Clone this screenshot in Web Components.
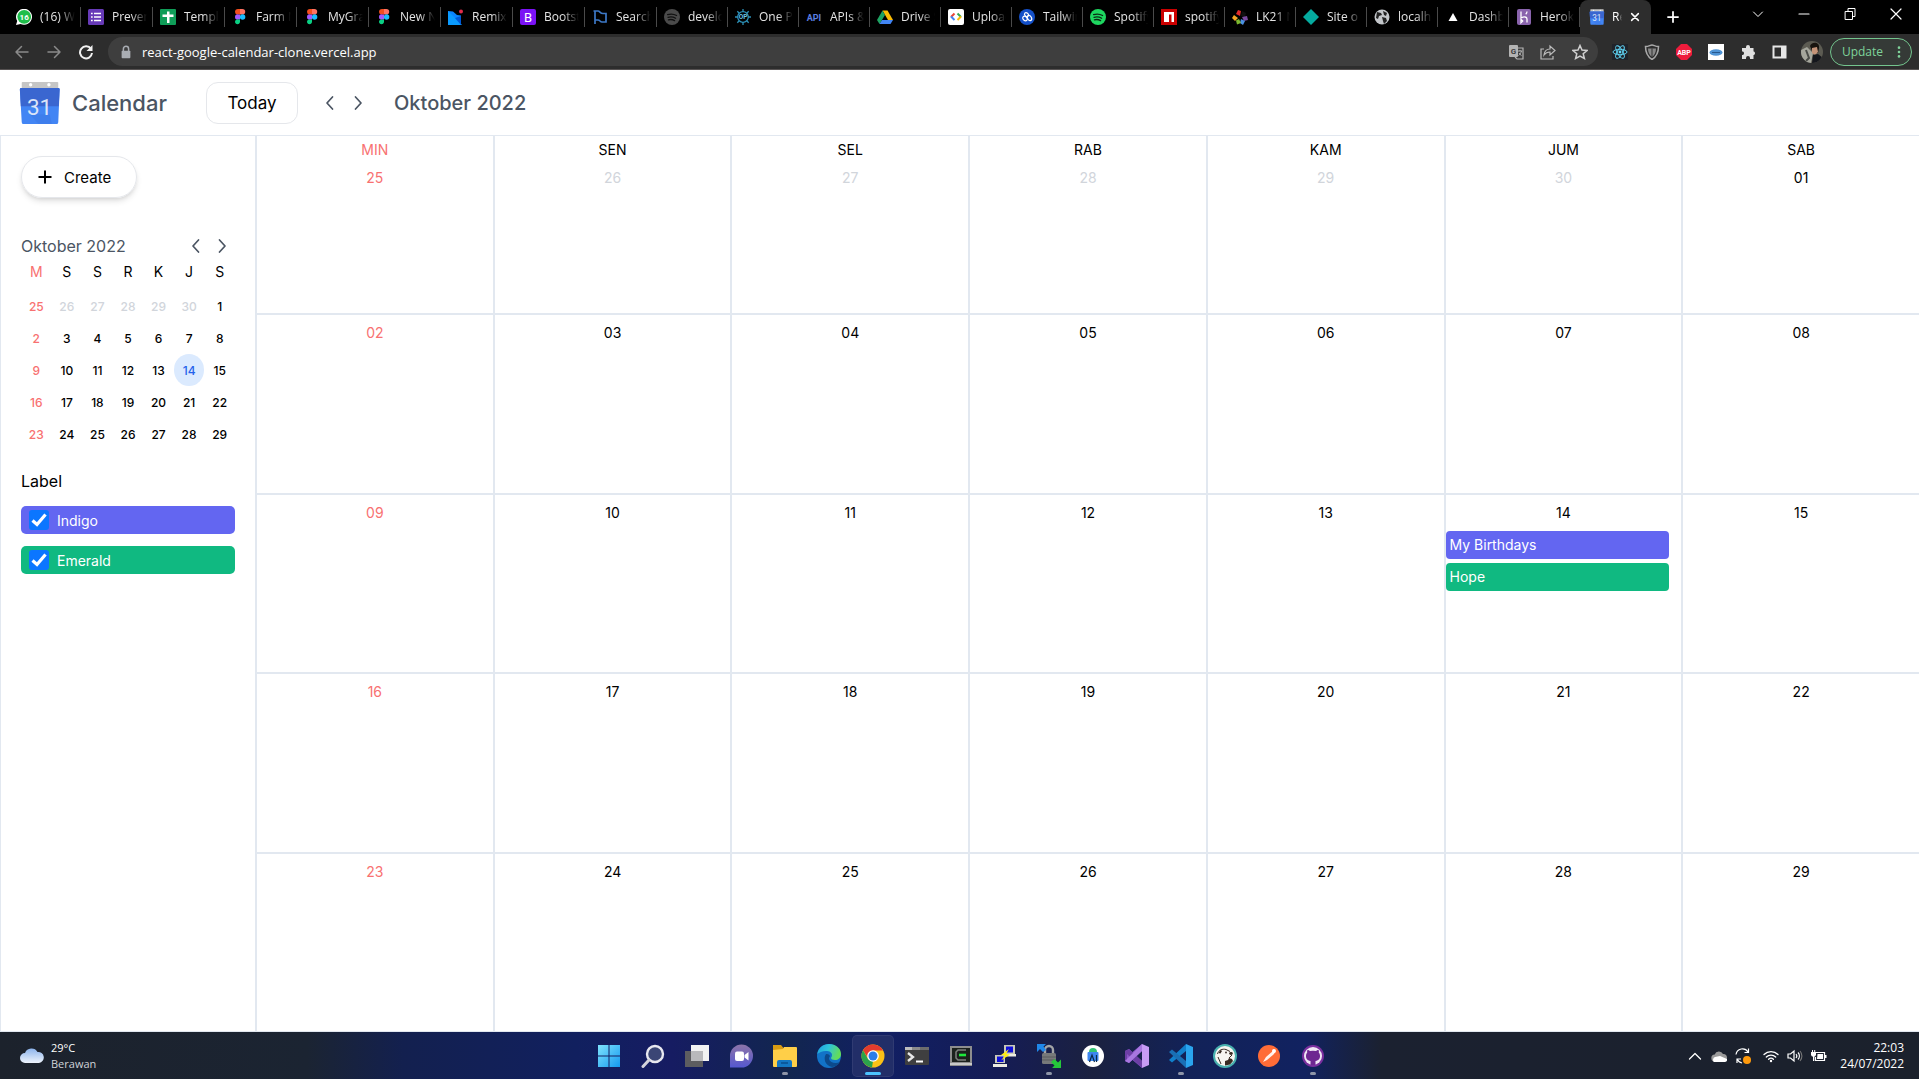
<!DOCTYPE html>
<html lang="id">
<head>
<meta charset="utf-8">
<title>Calendar</title>
<style>
  html, body { margin: 0; height: 100%; }
  body { font-family: Inter, "Open Sans", sans-serif; background: #fff; color: #000; }
</style>
</head>
<body>
<desktop-screen></desktop-screen>

<script>
const svg = (body, box = '0 0 16 16') => `<svg viewBox="${box}" xmlns="http://www.w3.org/2000/svg">${body}</svg>`;
const line = (d, w = 1.5, box) => svg(`<path d="${d}" fill="none" stroke="currentColor" stroke-width="${w}" stroke-linecap="round" stroke-linejoin="round"/>`, box);
const figma = svg('<path d="M3 3a3 3 0 0 1 3-3h2v5.6H6A2.8 2.8 0 0 1 3 3z" fill="#f24e1e"/><path d="M8 0h2.4a2.8 2.8 0 0 1 0 5.6H8z" fill="#ff7262"/><path d="M3 8a2.7 2.7 0 0 1 3-2.6h2v5.2H6A2.7 2.7 0 0 1 3 8z" fill="#a259ff"/><circle cx="10.6" cy="8" r="2.7" fill="#1abcfe"/><path d="M3 13.3a2.7 2.7 0 0 1 3-2.7h2v2.7a2.6 2.6 0 0 1-5 0z" fill="#0acf83"/>');
const spotify = (bg, fg) => svg(`<circle cx="8" cy="8" r="8" fill="${bg}"/><path d="M3.6 5.6c3-.9 6.400-.6 9 .9M4 8.300c2.600-.8 5.400-.4 7.600.9M4.400 10.800c2.200-.6 4.300-.3 6.200.8" fill="none" stroke="${fg}" stroke-width="1.300" stroke-linecap="round"/>`);
const label = (x, y, size, fill, text, extra = '') => `<text x="${x}" y="${y}" font-family="Roboto, sans-serif" font-size="${size}" fill="${fill}" text-anchor="middle" ${extra}>${text}</text>`;

const ICONS = {
  whatsapp: svg('<path d="M0 16l1.200-4A8 8 0 1 1 4.500 15z" fill="#fff"/><circle cx="8.200" cy="7.800" r="6.900" fill="#1fbe4b"/>' + label(8.2, 11, 8, '#fff', '16', 'font-weight="700"')),
  forms: svg('<rect width="16" height="16" rx="1.500" fill="#673ab7"/><path d="M6 4.500h7M6 8h7M6 11.500h7" stroke="#fff" stroke-width="1.700"/><path d="M3 4.500h1.700M3 8h1.700M3 11.500h1.700" stroke="#fff" stroke-width="1.700"/>'),
  sheets: svg('<rect width="16" height="16" rx="1" fill="#0f9d58"/><path d="M7 2.500h2.500V14H7zM2.500 5.500h11V8h-11z" fill="#fff"/>'),
  figma,
  remix: svg('<path d="M0 2l5 .5 4 3.500 4 .5V16H0z" fill="#0a84ff"/><path d="M0 2l14 14H0z" fill="#0a9bff"/><path d="M7 9l6-2v9z" fill="#0058d6"/><circle cx="13" cy="2.500" r="2" fill="#e22b4a"/>'),
  bootstrap: svg('<rect width="16" height="16" rx="2" fill="#7b12f5"/>' + label(8, 12.6, 13, '#fff', 'B')),
  flag: svg('<path d="M3 15V11h3c2 0 2 2 4 2h4V4.500h-3c-3 0-3-2.500-5-2.500H1.500M3 2v9" fill="none" stroke="#3d78c6" stroke-width="1.700"/>'),
  spotifyGray: spotify('#4a4a4a', '#111'),
  spotify: spotify('#1ed760', '#0a2a14'),
  helm: svg('<g fill="none" stroke="#2c8fb5" stroke-width="1.300"><circle cx="8" cy="8" r="5.300"/><path d="M8 0v3M8 13v3M0 8h3M13 8h3M2.300 2.300l2 2M11.700 11.700l2 2M2.300 13.700l2-2M11.700 4.300l2-2"/></g>' + label(8, 10.3, 6.5, '#6ac6e6', 'OP', 'font-weight="700"')),
  api: svg(label(8, 12, 9, '#5b7fe0', 'API', 'font-weight="700"')),
  drive: svg('<path d="M5.500 1.500h5L16 11h-5z" fill="#fbbc04"/><path d="M5.500 1.500L0 11l2.500 4L8 6z" fill="#1ea362"/><path d="M2.500 15L5 11h11l-2.500 4z" fill="#4285f4"/>'),
  cloudCode: svg('<rect width="16" height="16" rx="2" fill="#fff"/><path d="M6.500 4.500L3 8" stroke="#ea4335" stroke-width="2"/><path d="M3 7.500L6.500 11" stroke="#4285f4" stroke-width="2"/><path d="M9.500 4.500L13 8" stroke="#34a853" stroke-width="2"/><path d="M13 7.500L9.500 11" stroke="#fbbc04" stroke-width="2"/>'),
  tailblocks: svg('<circle cx="8" cy="8" r="8" fill="#1450c8"/><g fill="none" stroke="#fff" stroke-width="1.200"><ellipse cx="6" cy="9.500" rx="2.500" ry="1.900" transform="rotate(40 6 9.500)"/><ellipse cx="10.500" cy="9" rx="2.800" ry="1.900" transform="rotate(60 10.500 9)"/><ellipse cx="7.500" cy="5.600" rx="2.200" ry="1.700" transform="rotate(40 7.500 5.600)"/></g>'),
  npm: svg('<rect width="16" height="16" fill="#cb0000"/><path d="M3 3h10v10h-2.500V5.500H8V13H3z" fill="#fff"/>'),
  fan: svg('<path d="M8 7L4 5l2-4 3 1z" fill="#e02b2b"/><path d="M9 7l1-5 4 2-1 4z" fill="#111"/><path d="M10 8l5-1 1 4-4 1z" fill="#7a4aa0"/><path d="M9 10l4 2-2 4-3-2z" fill="#4a90e2"/><path d="M7 10l2 4-4 1.500-1-4z" fill="#7cb82f"/><path d="M6 9l-3 3-3-3 2-3z" fill="#f5a623"/>'),
  diamond: svg('<path d="M8 0l8 8-8 8-8-8z" fill="#05ab9f"/>'),
  globe: svg('<circle cx="8" cy="8" r="7.500" fill="#c3c6ca"/><path d="M3 3l4 1 1 2-3 1-1 3-2-1zM9 2l4 2-1 3-2-1zM8 8l4 1 1 3-3 3-1-3z" fill="#222"/>'),
  vercel: svg('<path d="M8 4l4.500 8h-9z" fill="#fff"/>'),
  heroku: svg('<rect x="1" width="14" height="16" rx="2" fill="#8a64ad"/><path d="M5 2.500V9c3-1.500 6-1.500 6 1v3.500M11 2.500c0 1-.5 2-1.300 2.700M5 10.500v3.200l1.700-1.600z" fill="none" stroke="#fff" stroke-width="1.300"/>'),
  calendar: svg('<path d="M3 1h37a1 1 0 0 1 1 1v7H2V2a1 1 0 0 1 1-1z" fill="#c6c6c6"/><circle cx="11.500" cy="4" r="1.800" fill="#fff"/><circle cx="31" cy="4" r="1.800" fill="#fff"/><path d="M1.500 7.500h39.500c1 0 1.500.6 1.500 1.500L41 44a2 2 0 0 1-2 2H4a2 2 0 0 1-2-2L0 9c0-.9.5-1.500 1.500-1.500z" fill="#4285f4"/><path d="M1.500 7.500h39.500c1 0 1.500.6 1.500 1.500l-1 18H1L0 9c0-.9.5-1.500 1.500-1.500z" fill="#3a66d0"/><path d="M10 35l10 11h14L32 36z" fill="#3c7ae6" opacity=".6"/>' + label(21, 36, 24, '#dbe4f8', '31'), '0 0 43 47'),
  back: line('M14 8H2M7.500 2.500L2 8l5.500 5.500', 1.5),
  forward: line('M2 8h12M8.500 2.500L14 8l-5.500 5.500', 1.5),
  reload: svg('<path d="M13 5A6 6 0 1 0 14 9" fill="none" stroke="currentColor" stroke-width="2"/><path d="M14.500 1v6h-6z" fill="currentColor"/>'),
  lock: svg('<rect x="3" y="6.500" width="10" height="8.500" rx="1" fill="#a9adb3"/><path d="M5 7V4.500a3 3 0 0 1 6 0V7" fill="none" stroke="#a9adb3" stroke-width="1.700"/>'),
  translate: svg('<rect x="1" y="1" width="9" height="12" rx="1" fill="#b4b4b4"/><path d="M7 4h8v11H9l-2-2" fill="none" stroke="#b4b4b4" stroke-width="1.200"/>' + label(5.5, 10, 8, '#3c3c3c', 'G', 'font-weight="700"') + '<path d="M10 7h4M12 6v1M13.500 7c-.5 2-2 4-3 4.500M11 9c.6 1 1.500 2 2.500 2.500" fill="none" stroke="#b4b4b4"/>'),
  share: svg('<path d="M4 5H1v10h12v-3M4 11c.5-4 3-6 6-6V2l5 4.500L10 11V8c-3 0-4.500 1-6 3z" fill="none" stroke="#bcbcbc" stroke-width="1.200"/>'),
  star: svg('<path d="M8 1.500l2 4.600 5 .4-3.800 3.200 1.200 4.800L8 12l-4.400 2.500 1.200-4.800L1 6.500l5-.4z" fill="none" stroke="#cfcfcf" stroke-width="1.500"/>'),
  react: svg('<rect width="16" height="16" fill="#20232a"/><g fill="none" stroke="#61dafb" stroke-width=".9"><ellipse cx="8" cy="8" rx="7" ry="2.700"/><ellipse cx="8" cy="8" rx="7" ry="2.700" transform="rotate(60 8 8)"/><ellipse cx="8" cy="8" rx="7" ry="2.700" transform="rotate(120 8 8)"/></g><circle cx="8" cy="8" r="1.400" fill="#61dafb"/>'),
  shield: svg('<path d="M1.500 2.500C5 2.500 6 1 8 1s3 1.500 6.500 1.500C14.500 9 12 13 8 15.500 4 13 1.500 9 1.500 2.500z" fill="none" stroke="#a8a8a8" stroke-width="1.500"/><path d="M4 4.500h8c0 4-1.500 6.500-4 8.500-2.500-2-4-4.500-4-8.500z" fill="#888"/><path d="M8 4.500V13" stroke="#333"/>'),
  abp: svg('<path d="M5 0h6l5 5v6l-5 5H5l-5-5V5z" fill="#ee1c3c"/>' + label(8, 10.6, 7, '#fff', 'ABP', 'font-weight="700"')),
  cloudExt: svg('<rect width="16" height="16" fill="#fff"/><ellipse cx="8" cy="8.500" rx="6.500" ry="3.200" fill="#4f93d4"/><path d="M4 8.500h8" stroke="#28588c" stroke-width="1"/>'),
  puzzle: svg('<path d="M6 4V3a2 2 0 0 1 4 0v1h3.500v3.500h.5a2 2 0 0 1 0 3.500h-.5v4H10v-1a2 2 0 0 0-4 0v1H2v-4h1a2 2 0 0 0 0-3.500H2V4z" fill="#e0e0e0"/>'),
  panel: svg('<path d="M1.500 2.500h12v11h-12z" fill="none" stroke="#e6e6e6" stroke-width="2"/><path d="M9 2h5v12H9z" fill="#e6e6e6"/>'),
  avatar: svg('<defs><clipPath id="c"><circle cx="11" cy="11" r="11"/></clipPath></defs><g clip-path="url(#c)"><path d="M0 0h22v22H0z" fill="#5c5b52"/><path d="M0 9l6-3 6 6-2 10H0z" fill="#a5a69c"/><path d="M5 9l3 8-3 3" stroke="#4a4c48" fill="none" stroke-width="2"/><path d="M9 5c2-5 10-4 9 2l-1 5h-5z" fill="#18140f"/><path d="M11 7l5-1 1 5-3 3-3-2z" fill="#c49378"/><path d="M12 14l5-1 5 4v5H11z" fill="#14161c"/></g>', '0 0 22 22'),
  dots: svg('<g fill="#7fd39a"><circle cx="8" cy="3" r="1.500"/><circle cx="8" cy="8" r="1.500"/><circle cx="8" cy="13" r="1.500"/></g>'),
  close: line('M3.500 3.500l9 9M12.500 3.500l-9 9', 2),
  plus: svg('<path d="M8 1.500v13M1.500 8h13" stroke="currentColor" stroke-width="2"/>'),
  chevDown: line('M3.500 6L8 10.500 12.500 6', 1),
  minimize: line('M3 8h10', 1.2),
  restore: line('M3.500 5.500h7v8h-7zM6 5V2.500h7v8h-2.500', 1),
  winClose: line('M3 3l10 10M13 3L3 13', 1.2),
  left: line('M10.500 2L5 8l5.500 6', 1.7),
  right: line('M5.500 2L11 8l-5.500 6', 1.7),

  windows: svg('<defs><linearGradient id="w" x2="1" y2="1"><stop stop-color="#7fe3fd"/><stop offset="1" stop-color="#1499ef"/></linearGradient></defs><path d="M1 1h10.500v10.500H1zM12.500 1H23v10.500H12.500zM1 12.500h10.500V23H1zM12.500 12.500H23V23H12.500z" fill="url(#w)"/>', '0 0 24 24'),
  search: svg('<circle cx="14" cy="10" r="8" fill="#3b4675" stroke="#e8e8f0" stroke-width="2.400"/><path d="M8 16l-6 6.500" stroke="#d4d4dc" stroke-width="3" stroke-linecap="round"/>', '0 0 24 24'),
  taskView: svg('<path d="M6 1h18v16H6z" fill="#f2f2f2"/><path d="M0 7h18v16H0z" fill="#5d5d60"/><path d="M6 7h12v10H6z" fill="#b9b9bc"/>', '0 0 24 24'),
  chat: svg('<defs><linearGradient id="t" x2="0" y2="1"><stop stop-color="#8d74a8"/><stop offset="1" stop-color="#5558d0"/></linearGradient></defs><path d="M1 23.500V12A11.500 11.500 0 1 1 12.500 23.500z" fill="url(#t)"/><rect x="6" y="7.500" width="9" height="9.500" rx="2" fill="#fff"/><path d="M15.500 11l4-3v8.500l-4-3z" fill="#fff"/>', '0 0 24 24'),
  folder: svg('<path d="M0 1h8l2.500 3H24v3H0z" fill="#d89b12"/><path d="M0 6l10-1 1-2h12a1 1 0 0 1 1 1v18a1 1 0 0 1-1 1H1a1 1 0 0 1-1-1z" fill="#ffcf48"/><path d="M4 23v-5a2 2 0 0 1 2-2h11a2 2 0 0 1 2 2v5z" fill="#1377c4"/><path d="M8 19h7" stroke="#0a4f90" stroke-width="1.500"/>', '0 0 24 24'),
  edge: svg('<defs><linearGradient id="e" x2="1" y2=".3"><stop stop-color="#1d9de0"/><stop offset=".5" stop-color="#2fc4d8"/><stop offset="1" stop-color="#62dc5a"/></linearGradient></defs><circle cx="12" cy="12" r="12" fill="#1273c8"/><path d="M.3 10C1 4 6 0 12 0c7 0 12 4.500 12 10 0 4-3 6-6 6-2.500 0-4-1-4-2 0-.8 1-1 1-3 0-2.500-2.500-4-6-4-4 0-7 1.500-8.700 3z" fill="url(#e)"/><path d="M9 10c-3 4-1 12 6 13 4 0 7-3 8-5-4 2-10 1-11-3 0-1.500.5-2 1-3-1-2-3-2-4-2z" fill="#0c4a8c"/>', '0 0 24 24'),
  chrome: svg('<circle cx="12" cy="12" r="11.500" fill="#fbc116"/><path d="M2 6.300A11.500 11.500 0 0 1 22 6.500H12L7 14z" fill="#e33b2e"/><path d="M2 6.300l5.200 8.900L12 17l-1 6.500A11.500 11.500 0 0 1 2 6.300z" fill="#2ba24c"/><circle cx="12" cy="12" r="5.800" fill="#fff"/><circle cx="12" cy="12" r="4.500" fill="#2a7de9"/>', '0 0 24 24'),
  terminal: svg('<rect y="3" width="24" height="18" rx="1" fill="#3f3f40"/><path d="M0 3h7v3H0z" fill="#bdbdbd"/><path d="M7 3h8v3H7z" fill="#8b8b8b"/><path d="M15 3h9v3h-9z" fill="#6d6d6d"/><path d="M3 9l5 4-5 4" fill="none" stroke="#e8e8e8" stroke-width="2.300"/><path d="M11 17.500h7" stroke="#fff" stroke-width="2"/>', '0 0 24 24'),
  cmder: svg('<rect x="1" y="2" width="22" height="20" fill="#8e8e8e"/><rect x="3" y="4" width="18" height="14" fill="#1c211d"/><path d="M17 6H9L7 8v6l2 2h8" fill="none" stroke="#7d807d" stroke-width="1.500"/><path d="M10 11h7" stroke="#1ee83c" stroke-width="2.600"/><path d="M1 19h22v2H1z" fill="#c9c9c9"/>', '0 0 24 24'),
  putty: svg('<path d="M11 1h11v9H11z" fill="#c9c9b8"/><path d="M13 2.500h7v6h-7z" fill="#1010d8"/><path d="M10 10h13v2.500H10z" fill="#ecece0"/><path d="M2 11h10v8H2z" fill="#c9c9b8"/><path d="M4 12.500h6.500v5.500H4z" fill="#1010d8"/><path d="M0 20h14v3H0z" fill="#ecece0"/><path d="M16 5l-8 6 4 .5-4 5 9-6-4-.5z" fill="#ffee10"/>', '0 0 24 24'),
  winscp: svg('<rect x="5" y="9" width="14" height="11" rx="1.500" fill="#77797a"/><path d="M5 13h14M5 16h14" stroke="#5b5d5e"/><path d="M8 9V6a4 4 0 0 1 8 0v3" fill="none" stroke="#a2a4a6" stroke-width="2.400"/><path d="M0 0h9L6.500 2.500 9 6 6 8 3 5 0 8z" fill="#1f87ea"/><path d="M24 24h-9l2.500-2.500L14 18l3.500-3 3.500 3.500 3-3z" fill="#25c83a"/>', '0 0 24 24'),
  android: svg('<circle cx="12" cy="12" r="11" fill="#fff"/><path d="M8 8a4 4 0 0 1 8 0z" fill="#32c473"/><rect x="6.500" y="8" width="11" height="9" rx="1" fill="#3d87f0"/><path d="M8.500 18l2.500-7 2.500 7M15.500 11v7" fill="none" stroke="#0b2a4a" stroke-width="1.200"/>', '0 0 24 24'),
  vs: svg('<path d="M17 0l7 3v18l-7 3z" fill="#c79bf5"/><path d="M17 0v7L4 19l-4-2V7l4-2 13 12v7L4 13v-2z" fill="#8a55c8"/><path d="M0 7l4-2 13 12v7L2 10v6L0 17z" fill="#6c3fa5"/><path d="M17 0v7L4 19l-4-2z" fill="#a877e0"/>', '0 0 24 24'),
  vscode: svg('<path d="M17 0v7L3 18.500 0 16z" fill="#1180cc"/><path d="M17 24v-7L3 5.500 0 8z" fill="#1a6fb4"/><path d="M17 0l7 3v18l-7 3z" fill="#2aa5ee"/>', '0 0 24 24'),
  dbeaver: svg('<circle cx="12" cy="12" r="12" fill="#48b0ae"/><circle cx="12" cy="12" r="10" fill="#f7f5f0"/><path d="M4.500 10c1-4 5-5.500 8.500-4.500l4 2" fill="none" stroke="#382a22" stroke-width="1"/><path d="M12 17l3-1 1-2 3 1 1 2-3 3.500-5 1z" fill="#382a22"/><ellipse cx="18" cy="9.500" rx="1.800" ry="1.400" fill="#382a22"/><path d="M5.500 9l2-3 1.500 1-1.500 2.500z" fill="#382a22"/><circle cx="13" cy="8.500" r=".9" fill="#382a22"/><path d="M5 13l3 7M19 11l-3 3" stroke="#382a22" fill="none"/>', '0 0 24 24'),
  postman: svg('<circle cx="12" cy="12" r="11" fill="#ff6c37"/><path d="M6 18l3-5 7-6 2 1-1 2-7 6z" fill="#fff" opacity=".9"/><circle cx="17" cy="7" r="2" fill="#fff"/>', '0 0 24 24'),
  github: svg('<circle cx="12" cy="12" r="11" fill="#7a2f9e"/><circle cx="12" cy="12" r="9" fill="#efe6f4"/><path d="M9.500 21v-4c-3.500-.5-4.500-2.500-4.500-5 0-1.500.5-2.500 1.200-3.200-.2-.8-.2-1.900.2-2.800 1.100 0 2 .6 2.700 1.100a12 12 0 0 1 5.800 0c.7-.5 1.600-1.100 2.700-1.100.4.900.4 2 .2 2.800.7.700 1.200 1.700 1.200 3.200 0 2.500-1 4.500-4.500 5v4z" fill="#6e2891"/>', '0 0 24 24'),
  weather: svg('<defs><linearGradient id="g" x2="0" y2="1"><stop stop-color="#8db4ec"/><stop offset="1" stop-color="#eef4fc"/></linearGradient></defs><path d="M5 19a5 5 0 0 1 0-10 7 7 0 0 1 12.500-1A5.500 5.500 0 0 1 19 19z" fill="url(#g)"/>', '0 0 24 24'),
  up: line('M2.500 11L8 5.500 13.500 11', 1.3),
  onedrive: svg('<path d="M4 13.500a3.500 3.500 0 0 1-.3-7A4.500 4.500 0 0 1 12 6a3.700 3.700 0 0 1 .5 7.500z" fill="#9a9a9a"/><path d="M3 14a3 3 0 0 1 1-5l5-1 7 3a2.500 2.500 0 0 1-2 3z" fill="#fff"/>'),
  sync: svg('<path d="M1 6.500A6.500 6.500 0 0 1 13 4M13.500.5V4.500H9.500M2 15v-4h4M2 11c1 2 2.500 3.500 5 4" fill="none" stroke="#fff" stroke-width="1.200"/><circle cx="12" cy="12" r="4" fill="#ff9a0c"/>'),
  wifi: svg('<g fill="none" stroke="#fff" stroke-width="1.300" stroke-linecap="round"><path d="M1 6.500a10 10 0 0 1 14 0M3.300 9a6.700 6.700 0 0 1 9.400 0M5.600 11.300a3.400 3.400 0 0 1 4.800 0"/></g><circle cx="8" cy="13" r="1.200" fill="#fff"/>'),
  sound: svg('<path d="M1 6h2.500L7 3v10L3.500 10H1z" fill="none" stroke="#fff" stroke-width="1.200"/><path d="M9 6a3 3 0 0 1 0 4M11 4.500a5 5 0 0 1 0 7" fill="none" stroke="#fff" stroke-width="1.100"/><path d="M13 3a7.500 7.500 0 0 1 0 10" fill="none" stroke="#777" stroke-width="1.100"/>'),
  battery: svg('<path d="M5 4.500h8.500v8h-9V9" fill="none" stroke="#fff" stroke-width="1.200"/><path d="M6.500 6H12v5H6zM14 7h1.500v3H14zM0 4h5v3L4 8.500H1L0 7zM1 2h1v2H1zM3.200 2h1v2h-1zM2 8.500h1.300V13H2z" fill="#fff"/>')
};

class Base extends HTMLElement {
  connectedCallback() {
    if (this.shadowRoot) return;
    this.attachShadow({ mode: 'open' }).innerHTML =
      `<style>*{box-sizing:border-box}button{font:inherit;color:inherit;background:none;border:0;padding:0;margin:0;display:inline-flex;align-items:center;justify-content:center}${this.css()}</style>${this.html()}`;
  }
  css() { return ''; }
  html() { return '<slot></slot>'; }
  a(name, fallback = '') { return this.getAttribute(name) ?? fallback; }
}

customElements.define('app-icon', class extends Base {
  css() { const s = this.a('size', '16'); return `:host{display:block;flex:none;width:${s}px;height:${this.a('tall', s)}px}svg{display:block;width:100%;height:100%}`; }
  html() { return ICONS[this.a('name')]; }
});

customElements.define('desktop-screen', class extends Base {
  css() { return ':host{display:flex;flex-direction:column;min-height:100vh}calendar-app{flex:1}'; }
  html() { return '<browser-tabs></browser-tabs><browser-toolbar></browser-toolbar><calendar-app></calendar-app><os-taskbar></os-taskbar>'; }
});

customElements.define('browser-tab', class extends Base {
  css() {
    return `:host{display:flex;min-width:0;height:34px;box-sizing:border-box;align-items:center;padding:6px 3px 6px 7px;gap:8px;color:#e4e4e4;
      background:linear-gradient(#4a4a4a,#4a4a4a) right center/1px 20px no-repeat}
      :host([active]){background:#2d2d2d;border-radius:8px 8px 0 0;color:#fff;padding-left:9px;padding-right:10px;gap:7px}
      span{flex:1;min-width:0;overflow:hidden;white-space:nowrap;font-size:12px;line-height:16px;-webkit-mask-image:linear-gradient(90deg,#000 50%,transparent 92%);mask-image:linear-gradient(90deg,#000 50%,transparent 92%)}
      :host([active]) span{-webkit-mask-image:linear-gradient(90deg,#000 60%,transparent);mask-image:linear-gradient(90deg,#000 60%,transparent)}`;
  }
  html() {
    return `<app-icon name="${this.a('icon')}"></app-icon><span><slot></slot></span>${this.hasAttribute('active') ? '<button aria-label="Close tab"><app-icon name="close" size="12"></app-icon></button>' : ''}`;
  }
});

customElements.define('browser-tabs', class extends Base {
  css() {
    return `:host{display:flex;height:34px;background:#000;color:#fff;font-family:"Open Sans","Noto Sans",sans-serif;padding-left:9px}
      .tabs{display:grid;grid-template-columns:repeat(9,minmax(0,72fr)) repeat(14,minmax(0,71fr));flex:1;min-width:0}.new{width:44px}.win{display:flex;width:224px;padding:0 0 6px 40px}.win button{flex:1}`;
  }
  html() {
    const tabs = [['whatsapp', '(16) W'], ['forms', 'Preven'], ['sheets', 'Templ'], ['figma', 'Farm N'], ['figma', 'MyGra'], ['figma', 'New N'], ['remix', 'Remix'], ['bootstrap', 'Bootst'], ['flag', 'Search'], ['spotifyGray', 'develo'], ['helm', 'One P'], ['api', 'APIs &amp;'], ['drive', 'Drive S'], ['cloudCode', 'Upload'], ['tailblocks', 'Tailwin'], ['spotify', 'Spotify'], ['npm', 'spotify'], ['fan', 'LK21 N'], ['diamond', 'Site o'], ['globe', 'localh'], ['vercel', 'Dashb'], ['heroku', 'Herok']];
    return `<div class="tabs">${tabs.map(([i, t]) => `<browser-tab icon="${i}">${t}</browser-tab>`).join('')}<browser-tab icon="calendar" active>Re</browser-tab></div>
      <button class="new" aria-label="New tab"><app-icon name="plus" size="14"></app-icon></button>
      <div class="win"><button aria-label="Search tabs"><app-icon name="chevDown"></app-icon></button><button aria-label="Minimize"><app-icon name="minimize"></app-icon></button><button aria-label="Restore"><app-icon name="restore"></app-icon></button><button aria-label="Close"><app-icon name="winClose"></app-icon></button></div>`;
  }
});

customElements.define('browser-toolbar', class extends Base {
  css() {
    return `:host{display:flex;align-items:center;height:36px;background:#2d2d2d;border-bottom:1px solid #565252;color:#f1f1f1;font-family:"Open Sans","Noto Sans",sans-serif;padding:0 7px 0 6px;box-sizing:content-box}
      button{width:32px;height:32px}.nav button:not(:last-child){color:#8a8a8a}.nav,.ext{display:flex}
      .bar{display:flex;align-items:center;flex:1;height:29px;margin:0 6px;border-radius:16px;background:#3e3e3e;padding:0 2px 0 11px}
      input{flex:1;min-width:0;border:0;background:none;color:#fff;font:13px/20px "Open Sans",sans-serif;padding:0 0 0 9px;outline:0}
      .upd{width:82px;height:28px;margin-left:2px;border:1px solid #74c58e;border-radius:14px;background:#353a37;color:#7fd39a;font-size:12px;gap:9px;padding-left:6px}`;
  }
  html() {
    const btn = (n, l, s = 16) => `<button aria-label="${l}"><app-icon name="${n}" size="${s}"></app-icon></button>`;
    return `<div class="nav">${btn('back', 'Back')}${btn('forward', 'Forward')}${btn('reload', 'Reload')}</div>
      <div class="bar"><app-icon name="lock" size="14"></app-icon><input aria-label="Address" value="react-google-calendar-clone.vercel.app">${btn('translate', 'Translate')}${btn('share', 'Share')}${btn('star', 'Bookmark')}</div>
      <div class="ext">${btn('react', 'React')}${btn('shield', 'Shield')}${btn('abp', 'Adblock')}${btn('cloudExt', 'Extension')}${btn('puzzle', 'Extensions')}${btn('panel', 'Side panel')}${btn('avatar', 'Profile', 22)}</div>
      <button class="upd">Update<app-icon name="dots" size="14"></app-icon></button>`;
  }
});

customElements.define('calendar-app', class extends Base {
  css() { return ':host{display:flex;flex-direction:column;min-height:0;background:#fff;overflow:hidden}main{display:flex;flex:1;margin-right:-1px}side-panel{width:256px;box-sizing:border-box}month-grid{flex:1}'; }
  html() { return '<calendar-header></calendar-header><main><side-panel></side-panel><month-grid></month-grid></main>'; }
});

customElements.define('calendar-header', class extends Base {
  css() {
    return `:host{display:flex;align-items:center;height:65px;padding-left:19px;color:#4b5563}
      h1,h2{margin:0;line-height:28px;font-weight:500}h1{margin-left:11px;width:134px;font-size:22px}h2{font-size:20px}
      .today{width:92px;height:42px;border:1px solid #e5e7eb;border-radius:12px;color:#000;font-size:17px}
      .nav{display:flex;margin:0 22px 0 18px}.nav button{width:28px;height:28px}`;
  }
  html() {
    return `<app-icon name="calendar" size="42" tall="44"></app-icon><h1>Calendar</h1><button class="today">Today</button>
      <div class="nav"><button aria-label="Previous month"><app-icon name="left"></app-icon></button><button aria-label="Next month"><app-icon name="right"></app-icon></button></div><h2>Oktober 2022</h2>`;
  }
});

customElements.define('side-panel', class extends Base {
  css() {
    return `:host{display:block;border:1px solid #e2e8f0;padding:20px}
      .create{width:116px;height:42px;border:1px solid #e5e7eb;border-radius:21px;box-shadow:0 4px 6px -1px rgba(0,0,0,.12),0 2px 4px -2px rgba(0,0,0,.12);font-size:15px;gap:11px;justify-content:flex-start;padding-left:15px}
      mini-calendar{margin-top:34px}h3{margin:19px 0 13px;font-size:16px;line-height:24px;font-weight:400}
      label-item+label-item{margin-top:12px}`;
  }
  html() {
    return `<button class="create"><app-icon name="plus"></app-icon>Create</button><mini-calendar></mini-calendar><h3>Label</h3>
      <label-item color="#6366f1">Indigo</label-item><label-item color="#10b981">Emerald</label-item>`;
  }
});

const DAYS = [25, 26, 27, 28, 29, 30, ...Array.from({ length: 29 }, (_, i) => i + 1)];

customElements.define('mini-calendar', class extends Base {
  css() {
    return `:host{display:block}header{display:flex;align-items:center;height:28px;color:#4b5563;font-size:16px}header span{flex:1}header button{width:26px;height:28px}
      table{width:100%;border-collapse:collapse;table-layout:fixed;text-align:center}th,td{padding:0;height:32px;font-size:12px;font-weight:500}
      th{height:26px;font-size:14px;font-weight:400}thead{border-bottom:8px solid transparent}
      tr>:first-child{color:#f87171}.out{color:#d1d5db}td button{width:100%;height:32px}.on button{background:#dbeafe;color:#2563eb;border-radius:50%}`;
  }
  html() {
    const rows = [0, 1, 2, 3, 4].map(r => '<tr>' + DAYS.slice(r * 7, r * 7 + 7).map((d, c) => `<td class="${r === 0 && c > 0 && c < 6 ? 'out' : ''}${r === 2 && c === 5 ? 'on' : ''}"><button>${d}</button></td>`).join('') + '</tr>').join('');
    return `<header><span>Oktober 2022</span><button aria-label="Previous month"><app-icon name="left"></app-icon></button><button aria-label="Next month"><app-icon name="right"></app-icon></button></header>
      <table><thead><tr>${[...'MSSRKJS'].map(d => `<th>${d}</th>`).join('')}</tr></thead><tbody>${rows}</tbody></table>`;
  }
});

customElements.define('label-item', class extends Base {
  css() {
    return `:host{display:block}label{display:flex;align-items:center;gap:8px;height:28px;padding-left:8px;border-radius:5px;background:${this.a('color')};color:#fff;font-size:14px}
      input{appearance:none;width:20px;height:20px;margin:0;border-radius:3px;background:#0b76ff}.box{display:grid}.box>*{grid-area:1/1}svg{width:20px;height:20px;pointer-events:none}`;
  }
  html() { return `<label><span class="box"><input type="checkbox" checked>${svg('<path d="M3.500 10.500l4.500 4 8.500-10" fill="none" stroke="#fff" stroke-width="3.200"/>', '0 0 20 20')}</span><slot></slot></label>`; }
});

customElements.define('event-chip', class extends Base {
  css() { return `:host{display:block;margin:0 12px 4px 0}button{width:100%;height:28px;padding:0 4px;justify-content:flex-start;border-radius:4px;background:${this.a('color')};color:#fff;font-size:14px}`; }
  html() { return '<button><slot></slot></button>'; }
});

customElements.define('day-cell', class extends Base {
  css() {
    return `:host{display:block;min-width:0;border:1px solid #e2e8f0;font-size:14px;line-height:20px;text-align:center}
      :host([sunday]){color:#f87171}:host([out]) .num{color:#d1d5db}.name{margin-top:4px}.num{margin:4px 0;padding:4px}`;
  }
  html() { return `${this.a('name') ? `<div class="name">${this.a('name')}</div>` : ''}<div class="num">${this.a('day')}</div><slot></slot>`; }
});

customElements.define('month-grid', class extends Base {
  css() { return ':host{display:grid;grid-template-columns:repeat(7,minmax(0,1fr));grid-template-rows:repeat(5,minmax(0,1fr))}'; }
  html() {
    const names = ['MIN', 'SEN', 'SEL', 'RAB', 'KAM', 'JUM', 'SAB'];
    return DAYS.map((d, i) => `<day-cell day="${String(d).padStart(2, '0')}"${i < 7 ? ` name="${names[i]}"` : ''}${i % 7 === 0 ? ' sunday' : i < 6 ? ' out' : ''}>${i === 19 ? '<event-chip color="#6366f1">My Birthdays</event-chip><event-chip color="#10b981">Hope</event-chip>' : ''}</day-cell>`).join('');
  }
});

customElements.define('taskbar-app', class extends Base {
  css() {
    return `:host{display:block}button{width:40px;height:40px;margin:0 2px;flex-direction:column;border-radius:4px;gap:4px;padding-top:7px}
      i{width:6px;height:3px;border-radius:2px}:host([open]) i{background:#8e95a8}:host([active]) i{width:16px;background:#4cc2ff}
      :host([active]) button{background:#222e68;box-shadow:0 0 0 1px #303b72}`;
  }
  html() { return `<button aria-label="${this.a('icon')}"><app-icon name="${this.a('icon')}" size="24"></app-icon><i></i></button>`; }
});

customElements.define('os-taskbar', class extends Base {
  css() {
    return `:host{display:grid;grid-template-columns:1fr auto 1fr;align-items:center;height:47px;color:#fff;font-family:"Open Sans","Noto Sans",sans-serif;font-size:11px;line-height:16px;
      background:linear-gradient(90deg,#1c222c 0,#1b2432 16%,#13204f 21%,#11205f 30%,#161c62 35%,#12264f 41%,#111f63 46%,#151c55 52%,#1b2140 57%,#122258 62%,#112260 68%,#1b2130 72%,#1b212c 100%)}
      .weather{display:flex;align-items:center;gap:7px;padding-left:20px;justify-self:start;text-align:left}.weather span span{color:#cfd2d8}
      .apps{display:flex;padding-left:2px}.tray{display:flex;align-items:center;justify-self:end;padding-right:15px}.tray app-icon{margin-right:8px}.tray app-icon[name=sync]{margin-right:12px}.clock{text-align:right;width:69px;font-size:12px}
      .weather span span,.clock span{display:block}`;
  }
  html() {
    const apps = ['windows', 'search', 'taskView', 'chat', 'folder', 'edge', 'chrome', 'terminal', 'cmder', 'putty', 'winscp', 'android', 'vs', 'vscode', 'dbeaver', 'postman', 'github'];
    const open = ['folder', 'chrome', 'winscp', 'vscode', 'github'];
    return `<button class="weather"><app-icon name="weather" size="24"></app-icon><span>29°C<span>Berawan</span></span></button>
      <div class="apps">${apps.map(n => `<taskbar-app icon="${n}"${open.includes(n) ? ' open' : ''}${n === 'chrome' ? ' active' : ''}></taskbar-app>`).join('')}</div>
      <div class="tray">${['up', 'onedrive', 'sync', 'wifi', 'sound', 'battery'].map(n => `<app-icon name="${n}"></app-icon>`).join('')}<div class="clock"><span>22:03</span><span>24/07/2022</span></div></div>`;
  }
});
</script>
</body>
</html>
